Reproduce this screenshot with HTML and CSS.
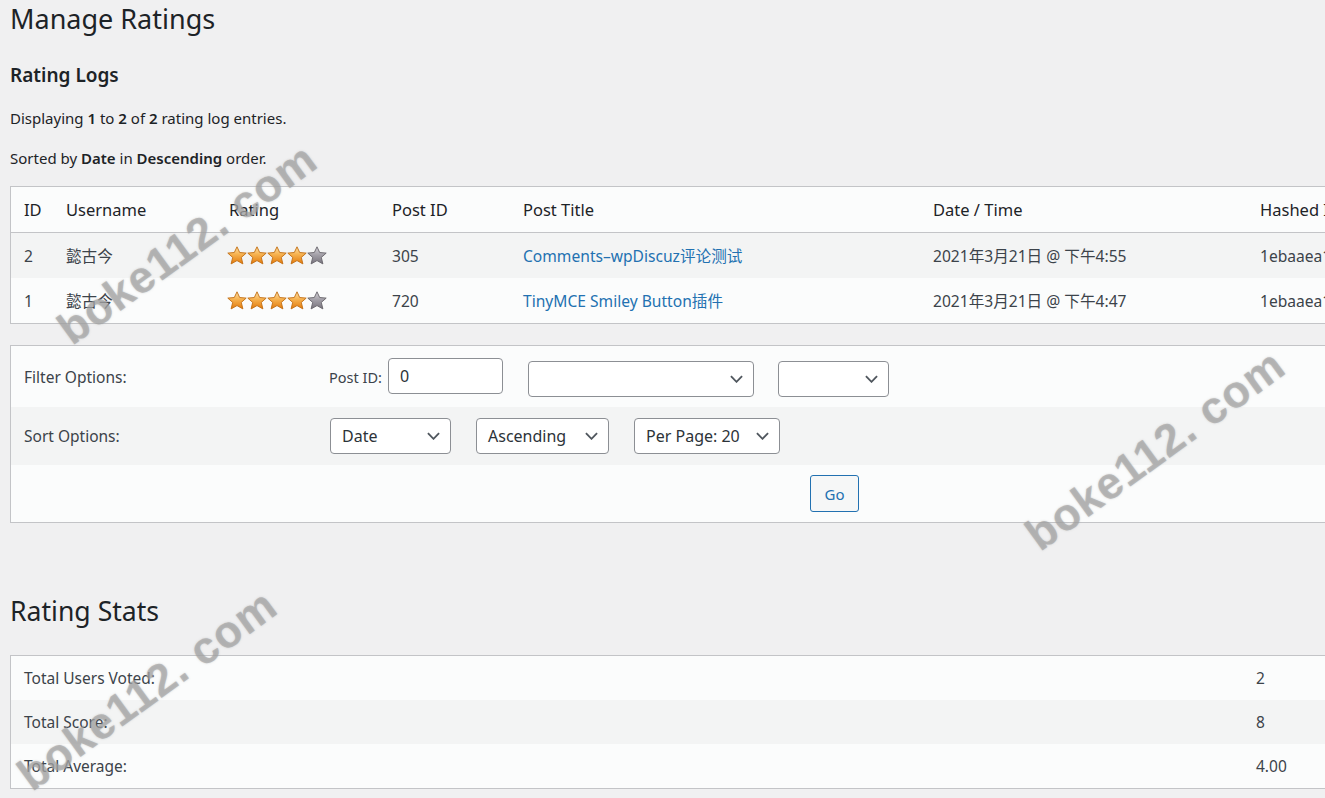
FILE: index.html
```html
<!DOCTYPE html>
<html lang="zh-CN">
<head>
<meta charset="utf-8">
<title>Manage Ratings</title>
<link rel="stylesheet" href="styles.css">
</head>
<body>
<svg class="defs" width="0" height="0" aria-hidden="true">
  <defs>
    <linearGradient id="gOn" x1="0" y1="0" x2="0" y2="1">
      <stop offset="0" stop-color="#fde0a6"/>
      <stop offset="0.45" stop-color="#f6b14e"/>
      <stop offset="1" stop-color="#e27a0c"/>
    </linearGradient>
    <linearGradient id="gOff" x1="0" y1="0" x2="0" y2="1">
      <stop offset="0" stop-color="#d2d0d6"/>
      <stop offset="0.5" stop-color="#a09da5"/>
      <stop offset="1" stop-color="#77737c"/>
    </linearGradient>
    <path id="star" d="M10 0.8 L12.7 6.5 L19.2 7.1 L14.3 11.4 L15.9 17.9 L10 14.6 L4.1 17.9 L5.7 11.4 L0.8 7.1 L7.3 6.5 Z"/>
  </defs>
</svg>
<div class="wrap">
  <h1 class="page-title">Manage Ratings</h1>
  <h2 class="section-title">Rating Logs</h2>
  <p class="info">Displaying <strong>1</strong> to <strong>2</strong> of <strong>2</strong> rating log entries.</p>
  <p class="info">Sorted by <strong>Date</strong> in <strong>Descending</strong> order.</p>

  <table class="widefat logs">
    <thead>
      <tr>
        <th class="c-id">ID</th>
        <th class="c-user">Username</th>
        <th class="c-rating">Rating</th>
        <th class="c-post">Post ID</th>
        <th class="c-title">Post Title</th>
        <th class="c-date">Date / Time</th>
        <th class="c-ip">Hashed IP / Host</th>
      </tr>
    </thead>
    <tbody>
      <tr class="alt">
        <td>2</td>
        <td>懿古今</td>
        <td><span class="stars">
          <svg viewBox="0 0 20 19" class="star"><use href="#star" fill="url(#gOn)" stroke="#c26d12" stroke-width="0.9" stroke-linejoin="round"/></svg>
          <svg viewBox="0 0 20 19" class="star"><use href="#star" fill="url(#gOn)" stroke="#c26d12" stroke-width="0.9" stroke-linejoin="round"/></svg>
          <svg viewBox="0 0 20 19" class="star"><use href="#star" fill="url(#gOn)" stroke="#c26d12" stroke-width="0.9" stroke-linejoin="round"/></svg>
          <svg viewBox="0 0 20 19" class="star"><use href="#star" fill="url(#gOn)" stroke="#c26d12" stroke-width="0.9" stroke-linejoin="round"/></svg>
          <svg viewBox="0 0 20 19" class="star"><use href="#star" fill="url(#gOff)" stroke="#66636a" stroke-width="0.9" stroke-linejoin="round"/></svg>
        </span></td>
        <td>305</td>
        <td><a href="#">Comments–wpDiscuz评论测试</a></td>
        <td>2021年3月21日 @ 下午4:55</td>
        <td>1ebaaea1c9d3f27b</td>
      </tr>
      <tr>
        <td>1</td>
        <td>懿古今</td>
        <td><span class="stars">
          <svg viewBox="0 0 20 19" class="star"><use href="#star" fill="url(#gOn)" stroke="#c26d12" stroke-width="0.9" stroke-linejoin="round"/></svg>
          <svg viewBox="0 0 20 19" class="star"><use href="#star" fill="url(#gOn)" stroke="#c26d12" stroke-width="0.9" stroke-linejoin="round"/></svg>
          <svg viewBox="0 0 20 19" class="star"><use href="#star" fill="url(#gOn)" stroke="#c26d12" stroke-width="0.9" stroke-linejoin="round"/></svg>
          <svg viewBox="0 0 20 19" class="star"><use href="#star" fill="url(#gOn)" stroke="#c26d12" stroke-width="0.9" stroke-linejoin="round"/></svg>
          <svg viewBox="0 0 20 19" class="star"><use href="#star" fill="url(#gOff)" stroke="#66636a" stroke-width="0.9" stroke-linejoin="round"/></svg>
        </span></td>
        <td>720</td>
        <td><a href="#">TinyMCE Smiley Button插件</a></td>
        <td>2021年3月21日 @ 下午4:47</td>
        <td>1ebaaea1c9d3f27b</td>
      </tr>
    </tbody>
  </table>

  <div class="widefat options">
    <div class="opt-row filter">
      <div class="opt-label">Filter Options:</div>
      <div class="opt-fields">
        <label class="field-label">Post ID:</label>
        <div class="input">0</div>
        <div class="select s-wide"><span></span><svg class="chev" viewBox="0 0 14 8"><path d="M1 1 L7 7 L13 1"/></svg></div>
        <div class="select s-small"><span></span><svg class="chev" viewBox="0 0 14 8"><path d="M1 1 L7 7 L13 1"/></svg></div>
      </div>
    </div>
    <div class="opt-row sort">
      <div class="opt-label">Sort Options:</div>
      <div class="opt-fields">
        <div class="select s-date"><span>Date</span><svg class="chev" viewBox="0 0 14 8"><path d="M1 1 L7 7 L13 1"/></svg></div>
        <div class="select s-order"><span>Ascending</span><svg class="chev" viewBox="0 0 14 8"><path d="M1 1 L7 7 L13 1"/></svg></div>
        <div class="select s-per"><span>Per Page: 20</span><svg class="chev" viewBox="0 0 14 8"><path d="M1 1 L7 7 L13 1"/></svg></div>
      </div>
    </div>
    <div class="opt-row go-row">
      <button class="button" type="button">Go</button>
    </div>
  </div>

  <h2 class="stats-title">Rating Stats</h2>
  <div class="widefat stats">
    <div class="stat-row"><span class="stat-label">Total Users Voted:</span><span class="stat-val">2</span></div>
    <div class="stat-row alt"><span class="stat-label">Total Score:</span><span class="stat-val">8</span></div>
    <div class="stat-row"><span class="stat-label">Total Average:</span><span class="stat-val">4.00</span></div>
  </div>
</div>

<div class="wm wm1">boke112. com</div>
<div class="wm wm2">boke112. com</div>
<div class="wm wm3">boke112. com</div>
</body>
</html>
```

FILE: styles.css
```css
html, body {
  margin: 0;
  padding: 0;
  overflow: hidden;
}
body {
  background: #f0f0f1;
  color: #1d2327;
  font-family: "Noto Sans", "Open Sans", "Noto Sans CJK SC", sans-serif;
  font-size: 15px;
  position: relative;
  width: 1325px;
  height: 798px;
}
.defs {
  display: block;
  width: 0;
  height: 0;
}
.wrap {
  padding-left: 10px;
  width: 1500px;
}
.page-title {
  font-size: 27px;
  font-weight: 400;
  line-height: 38px;
  margin: 0;
  color: #1d2327;
}
.section-title {
  font-size: 19px;
  font-weight: 600;
  line-height: 26px;
  margin: 24px 0 0;
  color: #1d2327;
}
.info {
  font-size: 15px;
  line-height: 20px;
  margin: 20px 0 0;
  color: #1d2327;
}
.info strong { font-weight: 600; }

.widefat {
  background: #fbfcfc;
  border: 1px solid #c3c4c7;
  box-sizing: border-box;
}
table.logs {
  margin-top: 18px;
  border-collapse: collapse;
  width: 1500px;
  table-layout: fixed;
}
.logs th {
  text-align: left;
  font-weight: 400;
  font-size: 16.5px;
  color: #1d2327;
  height: 45px;
  padding: 0 13px;
  border-bottom: 1px solid #c3c4c7;
}
.logs td {
  font-size: 15.6px;
  color: #3c434a;
  height: 45px;
  padding: 0 13px;
  white-space: nowrap;
}
.logs tr.alt td { background: #f3f4f4; }
.c-id { width: 16px; }
.c-user { width: 137px; }
.c-rating { width: 137px; }
.c-post { width: 105px; }
.c-title { width: 384px; }
.c-date { width: 301px; }
.logs a { color: #2271b1; text-decoration: none; }
.stars { display: inline-flex; vertical-align: middle; position: relative; top: -2px; left: -2px; }
.star { width: 20px; height: 19px; display: block; }

.options { margin-top: 21px; width: 1500px; }
.opt-row { display: flex; align-items: center; }
.opt-row.filter { height: 61px; }
.opt-row.sort { height: 58px; background: #f3f4f4; }
.opt-row.go-row { height: 57px; padding-left: 799px; }
.opt-label {
  width: 305px;
  padding-left: 13px;
  font-size: 15.5px;
  color: #3c434a;
}
.opt-fields { display: flex; align-items: center; }
.field-label { font-size: 14.5px; color: #3c434a; margin-right: 6px; }
.input {
  width: 115px;
  height: 36px;
  box-sizing: border-box;
  border: 1px solid #8c8f94;
  border-radius: 4px;
  background: #fff;
  padding: 0 11px;
  display: flex;
  align-items: center;
  font-size: 16px;
  color: #2c3338;
  margin-right: 25px;
  position: relative;
  top: -1px;
}
.select {
  height: 36px;
  box-sizing: border-box;
  border: 1px solid #8c8f94;
  border-radius: 4px;
  background: #fff;
  display: flex;
  align-items: center;
  justify-content: space-between;
  padding: 0 10px 0 11px;
  font-size: 16px;
  color: #2c3338;
  margin-right: 25px;
}
.filter .select { position: relative; top: 2px; }
.s-wide { width: 226px; }
.s-small { width: 111px; margin-left: -1px; }
.s-date { width: 121px; margin-left: 1px; }
.s-order { width: 133px; }
.s-per { width: 146px; }
.chev {
  width: 13px;
  height: 8px;
  fill: none;
  stroke: #50575e;
  stroke-width: 2;
}
.button {
  width: 49px;
  height: 37px;
  border: 1px solid #2271b1;
  border-radius: 3px;
  background: #f6f7f7;
  color: #2271b1;
  font-family: inherit;
  font-size: 15px;
  padding: 0;
}

.stats-title {
  font-size: 26.6px;
  font-weight: 400;
  line-height: 36px;
  margin: 70px 0 0;
  color: #1d2327;
}
.stats { margin-top: 26px; width: 1500px; }
.stat-row {
  display: flex;
  align-items: center;
  height: 44px;
  font-size: 15.5px;
  color: #3c434a;
}
.stat-row.alt { background: #f3f4f4; }
.stat-label { width: 1232px; padding-left: 13px; }

.wm {
  position: absolute;
  font-family: "Liberation Sans", Arial, sans-serif;
  font-size: 45px;
  font-weight: 700;
  letter-spacing: 1px;
  color: rgba(160, 160, 160, 0.62);
  text-shadow: 0 0 2px rgba(160, 160, 160, 0.5);
  transform: rotate(-36deg);
  transform-origin: 0 100%;
  white-space: nowrap;
  line-height: 1;
  pointer-events: none;
}
.wm1 { left: 76px; top: 307px; }
.wm2 { left: 1044px; top: 513px; }
.wm3 { left: 36px; top: 753px; }
```
